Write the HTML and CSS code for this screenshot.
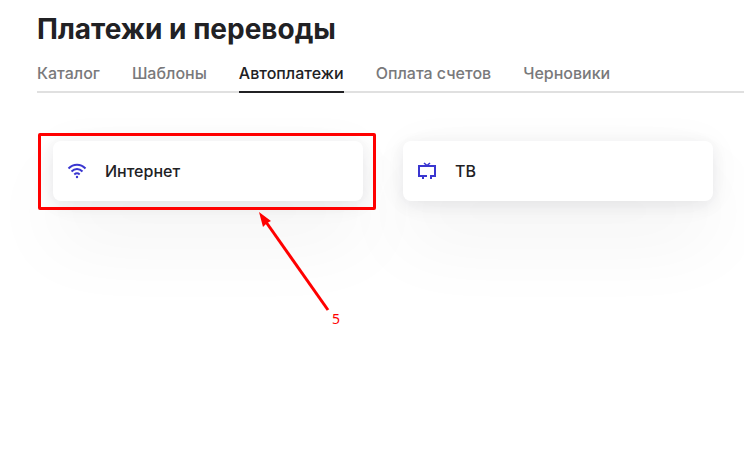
FILE: index.html
```html
<!DOCTYPE html>
<html lang="ru">
<head>
  <meta charset="UTF-8">
  <meta name="viewport" content="width=device-width, initial-scale=1">
  <title>Платежи и переводы</title>
  <link rel="stylesheet" href="styles.css">
</head>
<body>

  <header>
    <h1>Платежи и переводы</h1>
  </header>

  <nav class="tabs">
    <a href="#">Каталог</a>
    <a href="#">Шаблоны</a>
    <a href="#" class="active" aria-current="page">Автоплатежи</a>
    <a href="#">Оплата счетов</a>
    <a href="#">Черновики</a>
  </nav>

  <main class="cards">
    <div class="card-wrap">
      <a href="#" class="card">
        <svg class="icon" viewBox="0 0 24 24" aria-hidden="true">
          <g fill="none" stroke="#3a36d0" stroke-width="2">
            <path d="M3.5 9.5C8.5 4.5 15.5 4.5 20.5 9.5"/>
            <path d="M6.5 12.5C9.8 9.3 14.2 9.3 17.5 12.5"/>
            <path d="M9.3 15.5C11 14 13 14 14.7 15.5"/>
          </g>
          <circle cx="12" cy="18" r="1.2" fill="#3a36d0"/>
        </svg>
        <span>Интернет</span>
      </a>

      <div class="mark"></div>
      <svg class="arrow" viewBox="0 0 74 102" aria-hidden="true">
        <path d="M8 11L70 99" fill="none" stroke="#f00" stroke-width="3"/>
        <path d="M1 1L13 10L9 12L5 16Z" fill="#f00"/>
      </svg>
      <span class="step">5</span>
    </div>

    <div class="card-wrap">
      <a href="#" class="card">
        <svg class="icon" viewBox="0 0 24 24" aria-hidden="true">
          <g fill="none" stroke="#3a36d0" stroke-width="2">
            <path d="M12 17H4V7H20V17H15"/>
            <path d="M8 17V20M16 17V20"/>
            <path d="M9 4L12 6.5L15 4" stroke-width="1.6"/>
          </g>
        </svg>
        <span>ТВ</span>
      </a>
    </div>
  </main>

</body>
</html>
```

FILE: styles.css
```css
/* ========== GLOBAL STYLES ========== */
* {
  box-sizing: border-box;
  margin: 0;
  padding: 0;
}

body {
  font-family: Inter, sans-serif;
  font-size: 16px;
  font-weight: 500;
  line-height: 24px;
  color: #212124;
  background-color: #fff;
  min-height: 100vh;
  padding-left: 37px;
}

h1 {
  padding-top: 11px;
  font-size: 28px;
  line-height: 36px;
  font-weight: 700;
}

/* ========== TABS ========== */
.tabs {
  display: flex;
  gap: 32px;
  margin-top: 14px;
  box-shadow: inset 0 -2px #e0e0e0;
}

.tabs a {
  padding-bottom: 8px;
  color: #79797b;
  text-decoration: none;
  white-space: nowrap;
}

.tabs .active {
  color: #212124;
  box-shadow: inset 0 -2px #212124;
}

/* ========== CARDS ========== */
.cards {
  display: grid;
  grid-template-columns: 1fr 1fr;
  gap: 40px;
  padding: 48px 31px 16px 16px;
}

.card-wrap {
  position: relative;
}

.card {
  display: flex;
  align-items: center;
  gap: 16px;
  height: 60px;
  padding: 0 12px;
  border-radius: 8px;
  background: #fff;
  box-shadow: 0 0 40px rgba(20, 20, 50, 0.03), 0 4px 16px rgba(20, 20, 50, 0.08), 0 40px 80px rgba(20, 20, 20, 0.05);
  color: #212124;
  text-decoration: none;
}

.icon {
  width: 24px;
  height: 24px;
}

/* ========== STEP MARKER ========== */
.mark {
  position: absolute;
  inset: -8px -13px -9px -15px;
  border: 3px solid #f00;
  border-radius: 2px;
}

.arrow {
  position: absolute;
  top: 70px;
  left: 205px;
  width: 74px;
  height: 102px;
}

.step {
  position: absolute;
  top: 166px;
  left: 279px;
  font-family: "Noto Sans", sans-serif;
  font-size: 14px;
  font-weight: 400;
  color: #f00;
}
```
